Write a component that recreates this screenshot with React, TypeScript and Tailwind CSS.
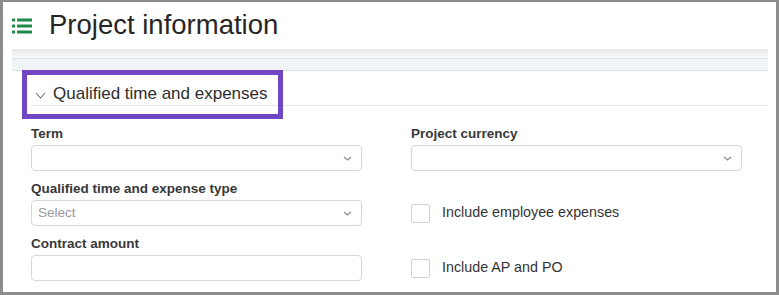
import React from 'react'

const font = "font-['Liberation_Sans',Arial,sans-serif]"

function ListIcon() {
  return (
    <svg width="20" height="16" viewBox="0 0 20 16" className="shrink-0">
      <g fill="#1e8a4a">
        <rect x="0" y="0.5" width="3" height="3" rx="0.5" />
        <rect x="5" y="0.5" width="15" height="3" rx="0.5" />
        <rect x="0" y="6.5" width="3" height="3" rx="0.5" />
        <rect x="5" y="6.5" width="15" height="3" rx="0.5" />
        <rect x="0" y="12.5" width="3" height="3" rx="0.5" />
        <rect x="5" y="12.5" width="15" height="3" rx="0.5" />
      </g>
    </svg>
  )
}

function Chevron({ className = '' }: { className?: string }) {
  return (
    <svg width="9" height="5" viewBox="0 0 9 5" className={className}>
      <path d="M1 1 L4.5 4 L8 1" fill="none" stroke="#8a8a8a" strokeWidth="1.2" />
    </svg>
  )
}

function Label({ children }: { children?: React.ReactNode }) {
  return (
    <div className="h-[16px] leading-[16px] mb-[3px] text-[13.5px] font-semibold text-[#383838] whitespace-nowrap">
      {children}
    </div>
  )
}

function SelectBox({ placeholder }: { placeholder?: string }) {
  return (
    <div className="h-[26px] w-full border border-[#d3d8db] rounded-[4px] flex items-center justify-between pl-[6px] pr-[9px]">
      <span className="text-[13.5px] text-[#9a9a9a]">{placeholder}</span>
      <Chevron />
    </div>
  )
}

function Check({ label }: { label: string }) {
  return (
    <div className="h-[26px] flex items-center gap-[12px]">
      <div className="w-[19px] h-[19px] border border-[#cdd2d5] rounded-[2px]" />
      <span className="text-[14.3px] text-[#333]">{label}</span>
    </div>
  )
}

export default function App() {
  return (
    <div
      className={`relative w-[779px] h-[295px] bg-white overflow-hidden border-[#8c8c8c] border-t-2 border-l-[3px] border-r-[3px] border-b-[3px] ${font}`}
    >
      {/* Page header */}
      <div className="h-[47px] flex items-center pl-[9px] gap-[17px]">
        <ListIcon />
        <h1 className="text-[27.5px] leading-[30px] text-[#262626] -mt-[1px]">Project information</h1>
      </div>

      {/* Toolbar strip */}
      <div className="ml-[9px] w-[756px]">
        <div className="h-[9px] bg-gradient-to-b from-[#e6e9eb] to-[#f8f9fa]" />
        <div className="h-[13px] bg-[#f1f4f6] border-t border-b border-[#dde2e5] rounded-bl-[3px]" />
      </div>

      {/* Section */}
      <div className="ml-[28px] w-[737px]">
        <div className="pt-[13px] pb-[1px] border-b border-[#e3e7ea] flex items-center">
          <svg width="11" height="7" viewBox="0 0 11 7" className="ml-[4px] mr-[7px] mt-[3px]">
            <path d="M1 1 L5.5 6 L10 1" fill="none" stroke="#707070" strokeWidth="1.1" />
          </svg>
          <span className="text-[17px] leading-[20px] text-[#2e2e2e]">Qualified time and expenses</span>
        </div>

        <div className="pt-[20px] grid grid-cols-[331px_331px] gap-x-[49px] gap-y-[10px]">
          <div>
            <Label>Term</Label>
            <SelectBox />
          </div>
          <div>
            <Label>Project currency</Label>
            <SelectBox />
          </div>
          <div>
            <Label>Qualified time and expense type</Label>
            <SelectBox placeholder="Select" />
          </div>
          <div>
            <Label />
            <Check label="Include employee expenses" />
          </div>
          <div>
            <Label>Contract amount</Label>
            <div className="h-[26px] w-full border border-[#d3d8db] rounded-[4px]" />
          </div>
          <div>
            <Label />
            <Check label="Include AP and PO" />
          </div>
        </div>
      </div>

      {/* Highlight annotation */}
      <div className="absolute left-[19px] top-[68px] w-[261px] h-[49px] border-[5px] border-[#7146c2]" />
    </div>
  )
}
